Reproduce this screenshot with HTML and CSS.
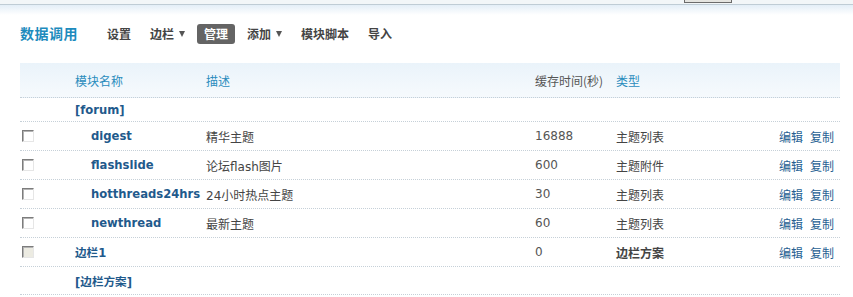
FILE: index.html
```html
<!DOCTYPE html>
<html lang="zh-CN">
<head>
<meta charset="utf-8">
<title>数据调用</title>
<link rel="stylesheet" href="styles.css">
</head>
<body>
<div class="topbar"><span class="tab-edge"></span></div>
<div class="head">
  <h1 class="title">数据调用</h1>
  <ul class="nav">
    <li class="nav-item">设置</li>
    <li class="nav-item">边栏<span class="caret"></span></li>
    <li class="nav-item active">管理</li>
    <li class="nav-item">添加<span class="caret"></span></li>
    <li class="nav-item">模块脚本</li>
    <li class="nav-item">导入</li>
  </ul>
</div>
<div class="grid">
  <div class="row thead">
    <div class="c-check"></div>
    <div class="c-name">模块名称</div>
    <div class="c-desc">描述</div>
    <div class="c-cache">缓存时间(秒)</div>
    <div class="c-type">类型</div>
    <div class="c-act"></div>
  </div>
  <div class="row group">
    <div class="c-check"></div>
    <div class="c-name name">[forum]</div>
    <div class="c-desc"></div><div class="c-cache"></div><div class="c-type"></div><div class="c-act"></div>
  </div>
  <div class="row item">
    <div class="c-check"><span class="cb"></span></div>
    <div class="c-name name sub">digest</div>
    <div class="c-desc">精华主题</div>
    <div class="c-cache">16888</div>
    <div class="c-type">主题列表</div>
    <div class="c-act"><a>编辑</a><a>复制</a></div>
  </div>
  <div class="row item">
    <div class="c-check"><span class="cb"></span></div>
    <div class="c-name name sub">flashslide</div>
    <div class="c-desc">论坛flash图片</div>
    <div class="c-cache">600</div>
    <div class="c-type">主题附件</div>
    <div class="c-act"><a>编辑</a><a>复制</a></div>
  </div>
  <div class="row item">
    <div class="c-check"><span class="cb"></span></div>
    <div class="c-name name sub">hotthreads24hrs</div>
    <div class="c-desc">24小时热点主题</div>
    <div class="c-cache">30</div>
    <div class="c-type">主题列表</div>
    <div class="c-act"><a>编辑</a><a>复制</a></div>
  </div>
  <div class="row item">
    <div class="c-check"><span class="cb"></span></div>
    <div class="c-name name sub">newthread</div>
    <div class="c-desc">最新主题</div>
    <div class="c-cache">60</div>
    <div class="c-type">主题列表</div>
    <div class="c-act"><a>编辑</a><a>复制</a></div>
  </div>
  <div class="row item">
    <div class="c-check"><span class="cb disabled"></span></div>
    <div class="c-name name">边栏1</div>
    <div class="c-desc"></div>
    <div class="c-cache">0</div>
    <div class="c-type strong">边栏方案</div>
    <div class="c-act"><a>编辑</a><a>复制</a></div>
  </div>
  <div class="row item last">
    <div class="c-check"></div>
    <div class="c-name name">[边栏方案]</div>
    <div class="c-desc"></div><div class="c-cache"></div><div class="c-type"></div><div class="c-act"></div>
  </div>
</div>
</body>
</html>
```
FILE: styles.css
```css
html, body {
  margin: 0;
  padding: 0;
  background: #fff;
  font-family: "DejaVu Sans", "Noto Sans CJK SC", sans-serif;
  font-size: 12px;
  color: #444;
}

.topbar {
  position: relative;
  height: 15px;
  background: linear-gradient(to bottom, #f2f6f8 0, #f2f6f8 4px, #bfccd5 4px, #bfccd5 5px, #e3eef7 5px, #ffffff 15px);
}
.tab-edge {
  position: absolute;
  left: 684px;
  top: 0;
  width: 46px;
  height: 2px;
  background: #e4e4e0;
  border: 1px solid #6b6b6b;
  border-top: 0;
}

.head {
  display: flex;
  align-items: center;
  height: 36px;
  padding-left: 20px;
}
.title {
  margin: 0 22px 0 0;
  font-size: 14px;
  letter-spacing: 0.5px;
  font-weight: bold;
  color: #1d8bbd;
  font-family: "Noto Sans CJK SC", sans-serif;
}
.nav {
  display: flex;
  align-items: center;
  gap: 5px;
  margin: 1px 0 0 0;
  padding: 0;
  list-style: none;
}
.nav-item {
  display: flex;
  align-items: center;
  height: 20px;
  padding: 0 7px;
  border-radius: 3px;
  font-weight: bold;
  color: #444;
  font-family: "Noto Sans CJK SC", sans-serif;
}
.nav-item.active {
  background: #646464;
  color: #fff;
}
.caret {
  width: 0;
  height: 0;
  margin-left: 5px;
  border-left: 3.5px solid transparent;
  border-right: 3.5px solid transparent;
  border-top: 6px solid #555;
}

.grid {
  width: 820px;
  margin: 12px 0 0 20px;
}
.row {
  display: grid;
  grid-template-columns: 55px 131px 329px 81px 120px 1fr;
  align-items: center;
  box-sizing: border-box;
  border-bottom: 1px dotted #c6d0d8;
}
.thead {
  height: 35px;
  background: linear-gradient(to bottom, #eaf3fa, #f6fafd);
  color: #2a8cbd;
  font-family: "Noto Sans CJK SC", sans-serif;
}
.group { height: 24px; }
.item { height: 29px; }
.item.last { height: 28px; }

.c-check { padding-left: 2px; display: flex; align-items: center; }
.name {
  font-weight: bold;
  color: #1f5a8c;
  font-size: 11.6px;
}
.name.sub { padding-left: 16px; }
.c-cache { color: #555; }
.strong { font-weight: bold; color: #444; }
.c-act {
  display: flex;
  justify-content: flex-end;
  gap: 7px;
  padding-right: 6px;
}
.c-act a { color: #275f92; }

.cb {
  display: block;
  width: 12px;
  height: 12px;
  box-sizing: border-box;
  background: #fff;
  border-top: 1px solid #7c7c7c;
  border-left: 1px solid #7c7c7c;
  border-right: 1px solid #e6e6e6;
  border-bottom: 1px solid #e6e6e6;
  box-shadow: inset 1px 1px 0 #b4b4b4;
}
.cb.disabled { background: #ecebe2; }
```
